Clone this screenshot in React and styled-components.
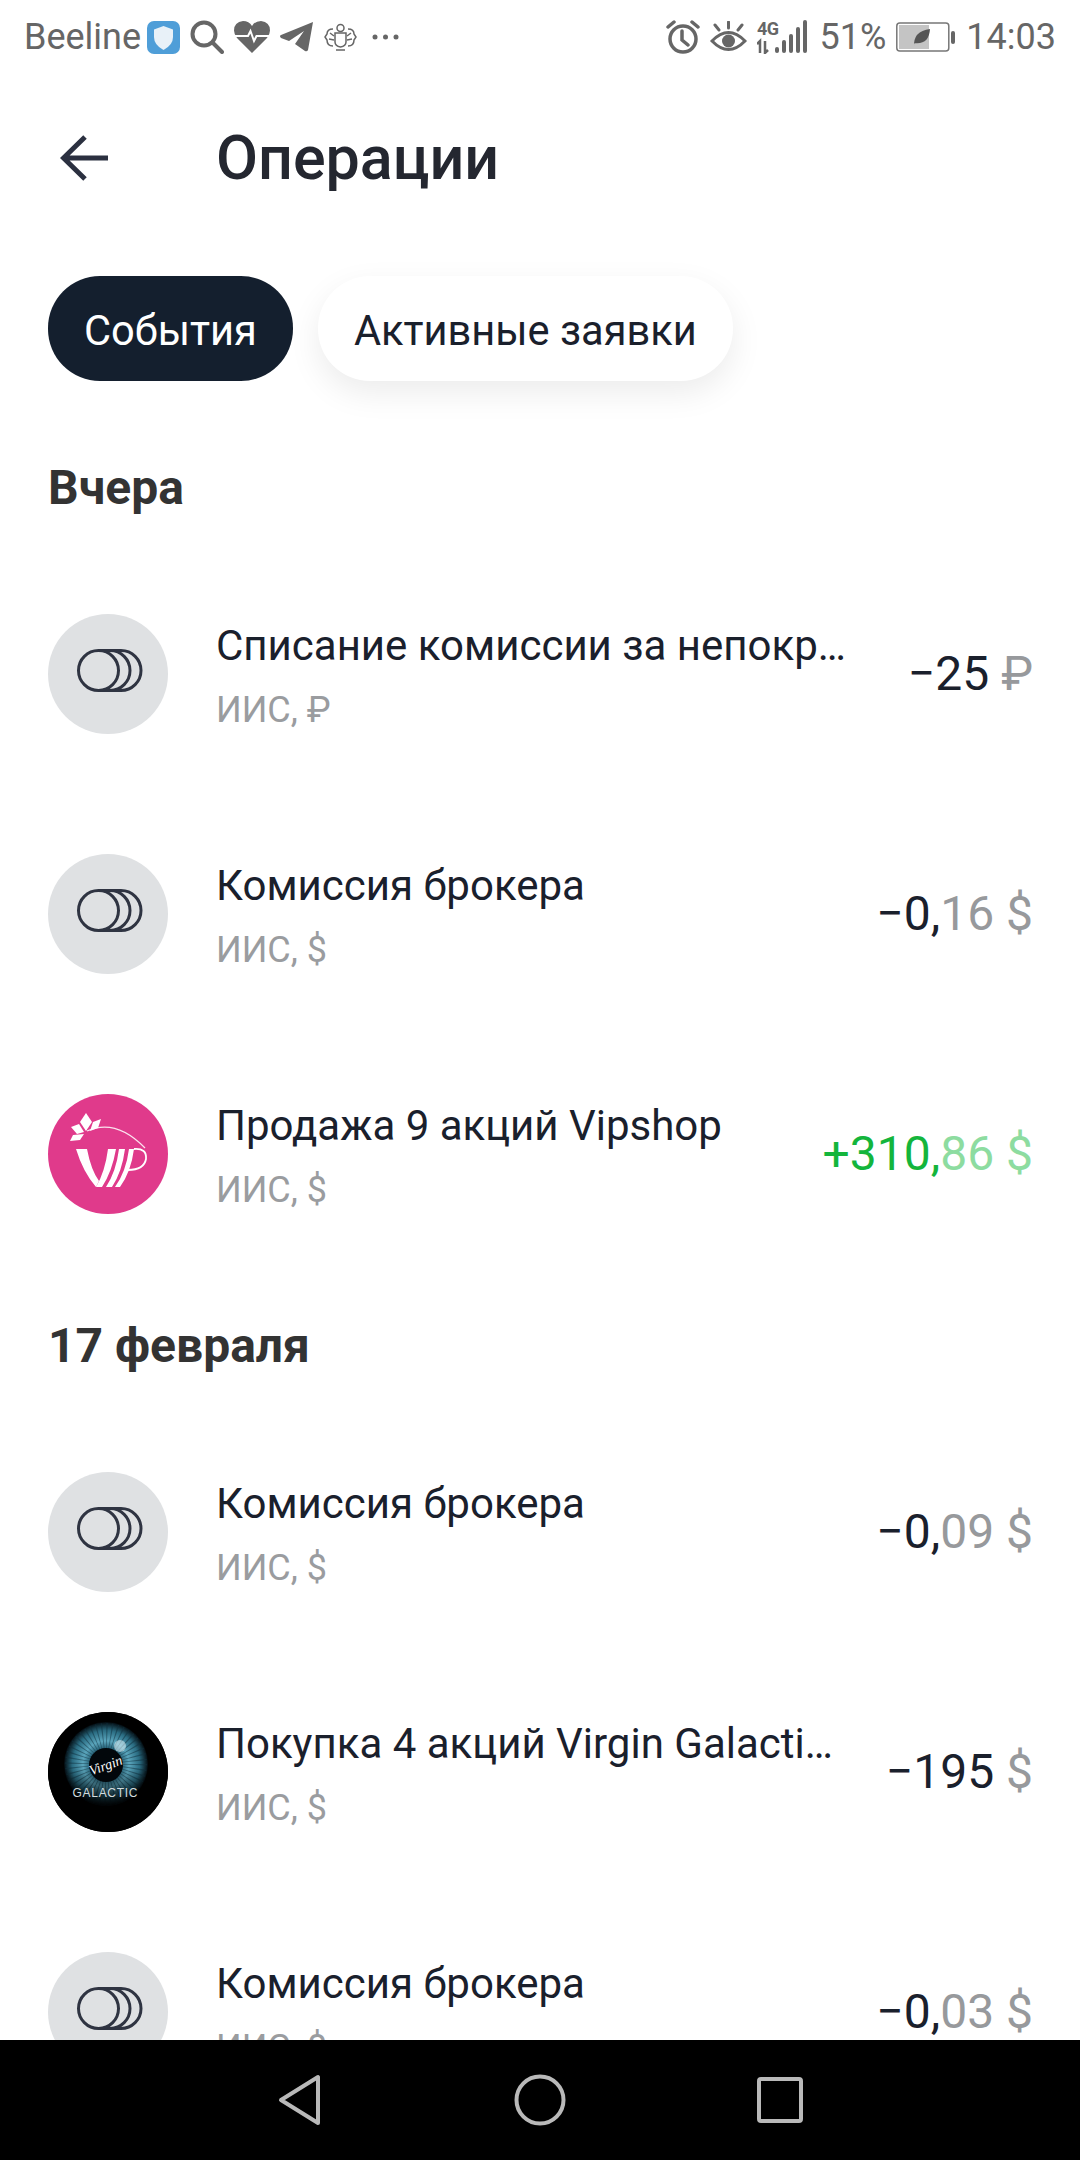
import React from 'react';
import styled, {createGlobalStyle} from 'styled-components';

const GlobalStyle = createGlobalStyle`
	html, body {
		margin: 0;
		padding: 0;
		background: #fff;
	}
	body {
		font-family: Roboto, "Noto Sans", sans-serif;
	}
`;

const Screen = styled.div`
	width: 1080px;
	height: 2160px;
	display: flex;
	flex-direction: column;
	overflow: hidden;
	background: #fff;
`;

const StatusBar = styled.div`
	height: 74px;
	flex: none;
	display: flex;
	justify-content: space-between;
	align-items: center;
	padding: 0 24px;
	color: #666;
	font-size: 36px;
	line-height: 74px;
`;

const StatusGroup = styled.div`
	display: flex;
	align-items: center;
	gap: 10px;

	svg {
		display: block;
		flex: none;
	}
`;

const Carrier = styled.span`
	margin-right: -4px;
`;

const Header = styled.div`
	height: 168px;
	flex: none;
	display: flex;
	align-items: center;
	padding-left: 60px;
	color: #1f2430;

	h1 {
		margin: 0 0 0 108px;
		font-size: 61px;
		font-weight: 500;
		color: #242730;
	}
`;

const Content = styled.div`
	flex: 1;
	min-height: 0;
	overflow: hidden;
`;

const Tabs = styled.div`
	display: flex;
	gap: 25px;
	padding: 34px 48px 35px;
`;

const Tab = styled.div`
	height: 105px;
	box-sizing: border-box;
	display: flex;
	align-items: center;
	padding: 4px 36px 0;
	border-radius: 52px;
	font-size: 41.6px;
	background: ${props => (props.$active ? '#141f2e' : '#fff')};
	color: ${props => (props.$active ? '#fff' : '#1a202c')};
	box-shadow: ${props => (props.$active ? 'none' : '0 12px 32px rgba(0, 0, 0, 0.08)')};
`;

const SectionTitle = styled.h2`
	margin: 0;
	height: 138px;
	padding: 44px 48px 0;
	box-sizing: border-box;
	font-size: 48px;
	line-height: 56px;
	font-weight: 700;
	color: #333;
`;

const Row = styled.div`
	height: 240px;
	display: flex;
	align-items: center;
	padding: 0 47px 0 48px;
`;

const Avatar = styled.div`
	width: 120px;
	height: 120px;
	flex: none;
	border-radius: 50%;
	overflow: hidden;
	background: ${props => props.$bg || '#dfe1e3'};

	svg {
		display: block;
	}
`;

const RowText = styled.div`
	flex: 1;
	min-width: 0;
	margin-left: 48px;
	padding-top: 4px;
`;

const RowTitle = styled.div`
	max-width: 632px;
	font-size: 42px;
	line-height: 50px;
	color: #1a202c;
	white-space: nowrap;
	overflow: hidden;
	text-overflow: ellipsis;
`;

const RowSub = styled.div`
	margin-top: 17px;
	font-size: 36px;
	line-height: 44px;
	color: #9a9c9f;
`;

const Amount = styled.div`
	flex: none;
	font-size: 48px;
	line-height: 56px;
	color: ${props => (props.$plus ? '#14b53c' : '#1a202c')};

	span {
		color: ${props => (props.$plus ? '#8ddca0' : '#97999c')};
	}
`;

const NavBar = styled.div`
	height: 120px;
	flex: none;
	display: flex;
	justify-content: center;
	align-items: center;
	background: #000;
`;

const NavItem = styled.div`
	width: 240px;
	display: flex;
	justify-content: center;
`;

const Coins = () => (
	<svg width='120' height='120' viewBox='0 0 120 120' fill='none' stroke='#2f3442' strokeWidth='3'>
		<path d='M62 36.5A20 20 0 0 1 62 76.5' />
		<path d='M73 36.5A20 20 0 0 1 73 76.5' />
		<path d='M50 36.5H73M50 76.5H73' />
		<circle cx='50.5' cy='56.5' r='20' />
	</svg>
);

const VipLogo = () => (
	<svg width='120' height='120' viewBox='0 0 120 120'>
		<g fill='#fff'>
			<path d='M28 55H39Q43 76 51 87L48 93Q35 78 28 55Z' />
			<path d='M48 93Q57 78 60 55H68Q64 78 54 93Z' />
			<path d='M58 93Q68 78 71 55H77Q74 78 64 93Z' />
			<path d='M67 93Q78 78 81 55H86Q83 78 72 93Z' />
			<path d='M23 33L31 30L36 38L29 40Z' />
			<path d='M32 28L38 19L44 28L38 37Z' />
			<path d='M42 37L45 28L53 25L50 34Z' />
			<path d='M22 47L25 41L36 40L32 46Z' />
		</g>
		<g fill='none' stroke='#fff'>
			<path d='M39 37Q68 24 97 54' strokeWidth='1.3' opacity='0.85' />
			<path d='M86 55Q99 54 98 65Q96 76 80 76' strokeWidth='1.8' />
		</g>
	</svg>
);

const VirginLogo = () => (
	<svg width='120' height='120' viewBox='0 0 120 120'>
		<defs>
			<radialGradient id='iris' cx='50%' cy='50%' r='50%'>
				<stop offset='35%' stopColor='#1e566b' />
				<stop offset='55%' stopColor='#5ba6bd' />
				<stop offset='80%' stopColor='#2a6c82' />
				<stop offset='100%' stopColor='#020a0f' />
			</radialGradient>
			<linearGradient id='fade' x1='0' y1='0' x2='0' y2='1'>
				<stop offset='55%' stopColor='#000' stopOpacity='0' />
				<stop offset='100%' stopColor='#000' stopOpacity='0.85' />
			</linearGradient>
		</defs>
		<rect width='120' height='120' fill='#000' />
		<circle cx='58' cy='52' r='42' fill='url(#iris)' />
		<circle cx='58' cy='52' r='28' fill='none' stroke='#0f2f3d' strokeWidth='26' strokeDasharray='1 3' opacity='0.5' />
		<circle cx='58' cy='52' r='42' fill='url(#fade)' />
		<circle cx='72' cy='34' r='6' fill='#dff2f8' opacity='0.55' />
		<circle cx='58' cy='53' r='17' fill='#02070b' />
		<text x='58' y='58' textAnchor='middle' fontFamily='Liberation Serif, serif' fontStyle='italic' fontSize='14' fill='#fff' transform='rotate(-20 58 54)'>Virgin</text>
		<text x='57' y='85' textAnchor='middle' textLength='65' fontFamily='Liberation Sans, sans-serif' fontSize='12' fill='#d3dcdf'>GALACTIC</text>
	</svg>
);

const BackArrow = () => (
	<svg width='48' height='46' viewBox='0 0 48 46' fill='none' stroke='#2b3040' strokeWidth='5'>
		<path d='M48 23H4M25 2L3.5 23L25 44' />
	</svg>
);

const Shield = () => (
	<svg width='33' height='33' viewBox='0 0 33 33'>
		<rect width='33' height='33' rx='7' fill='#4f9ed8' />
		<path d='M16.5 5L26 8.500V16Q26 24 16.500 29Q7 24 7 16V8.500Z' fill='#e8f1f8' />
	</svg>
);

const Search = () => (
	<svg width='34' height='34' viewBox='0 0 34 34' fill='none' stroke='#666' strokeWidth='4' strokeLinecap='round'>
		<circle cx='14' cy='14' r='11.500' />
		<path d='M22.500 22.500L32 32' />
	</svg>
);

const Heart = () => (
	<svg width='36' height='32' viewBox='0 0 36 32'>
		<path d='M18 32L3 17Q0 13 0 9.500Q0 1 9 0Q15 0 18 5Q21 0 27 0Q36 1 36 9.500Q36 13 33 17Z' fill='#666' />
		<path d='M1 15H14L16.500 10L20 20L22.500 15H35' fill='none' stroke='#fff' strokeWidth='2' />
	</svg>
);

const Plane = () => (
	<svg width='34' height='30' viewBox='0 0 34 30'>
		<path d='M33 0L28 28Q27 30 25 29L15 22L24 9L9 19L1 16Q-1 14 1 13Z' fill='#666' />
	</svg>
);

const Crest = () => (
	<svg width='33' height='30' viewBox='0 0 33 30' fill='none' stroke='#666' strokeWidth='1.500'>
		<path d='M11 11H22V20Q22 24 16.500 25Q11 24 11 20Z' />
		<circle cx='16.500' cy='6' r='3.500' />
		<path d='M9 7Q3 7 3 12L1 15L3 18Q3 24 9 24M24 7Q30 7 30 12L32 15L30 18Q30 24 24 24' />
		<path d='M6 11L10 14M5 17L10 18M27 11L23 14M28 17L23 18M12 28H21' />
	</svg>
);

const Dots = styled.svg`
	margin-left: 5px;
`;

const Alarm = () => (
	<svg width='34' height='34' viewBox='0 0 34 34' fill='none' stroke='#666' strokeWidth='3.500'>
		<circle cx='17' cy='19' r='13' />
		<path d='M16 11V20L22 25M2 7L8 2M32 7L26 2' strokeLinecap='round' />
	</svg>
);

const Eye = () => (
	<svg width='37' height='32' viewBox='0 0 37 32'>
		<path d='M2 20Q18.500 3 35 20Q18.500 37 2 20Z' fill='none' stroke='#666' strokeWidth='3' />
		<circle cx='18.500' cy='20' r='6.500' fill='#666' />
		<path d='M18.500 1V7M5 4L9 9M32 4L28 9' fill='none' stroke='#666' strokeWidth='3' strokeLinecap='round' />
	</svg>
);

const Signal = () => (
	<svg width='53' height='34' viewBox='0 0 53 34'>
		<text x='0' y='15' fontFamily='Roboto, sans-serif' fontSize='18' fontWeight='700' fill='#666' letterSpacing='-0.500'>4G</text>
		<path d='M3 33V21L0 24M8 21V33L11 30' fill='none' stroke='#666' strokeWidth='2.500' />
		<rect x='18' y='27' width='4' height='6' rx='2' fill='#666' />
		<rect x='25' y='20' width='4' height='13' rx='2' fill='#666' />
		<rect x='32' y='14' width='4' height='19' rx='2' fill='#666' />
		<rect x='39' y='7' width='4' height='26' rx='2' fill='#666' />
		<rect x='46' y='0' width='4' height='33' rx='2' fill='#666' />
	</svg>
);

const Battery = () => (
	<svg width='60' height='30' viewBox='0 0 60 30'>
		<rect x='0.800' y='1' width='52' height='28' rx='3' fill='none' stroke='#777' strokeWidth='1.500' />
		<rect x='3' y='3' width='30' height='24' fill='#c4c4c4' />
		<rect x='55' y='9' width='4' height='13' rx='2' fill='#666' />
		<path d='M18 25Q17 9 34 7Q33 23 18 21Z' fill='#555' />
	</svg>
);

const NavBack = () => (
	<svg width='44' height='52' viewBox='0 0 44 52' fill='none' stroke='#b9b9b9' strokeWidth='4' strokeLinejoin='round'>
		<path d='M40 3V49L3 26Z' />
	</svg>
);

const NavHome = () => (
	<svg width='52' height='52' viewBox='0 0 52 52' fill='none' stroke='#b9b9b9' strokeWidth='4'>
		<circle cx='26' cy='26' r='23.500' />
	</svg>
);

const NavRecent = () => (
	<svg width='46' height='46' viewBox='0 0 46 46' fill='none' stroke='#b9b9b9' strokeWidth='4' strokeLinejoin='round'>
		<rect x='2' y='2' width='42' height='42' rx='2' />
	</svg>
);

const sections = [
	{
		title: 'Вчера',
		rows: [
			{title: 'Списание комиссии за непокрытую позицию', sub: 'ИИС, ₽', whole: '−25', rest: ' ₽'},
			{title: 'Комиссия брокера', sub: 'ИИС, $', whole: '−0,', rest: '16 $'},
			{title: 'Продажа 9 акций Vipshop', sub: 'ИИС, $', whole: '+310,', rest: '86 $', plus: true, logo: 'vip'},
		],
	},
	{
		title: '17 февраля',
		rows: [
			{title: 'Комиссия брокера', sub: 'ИИС, $', whole: '−0,', rest: '09 $'},
			{title: 'Покупка 4 акций Virgin Galactic Holdings', sub: 'ИИС, $', whole: '−195', rest: ' $', logo: 'virgin'},
			{title: 'Комиссия брокера', sub: 'ИИС, $', whole: '−0,', rest: '03 $'},
		],
	},
];

function renderAvatar(logo) {
	if (logo === 'vip') {
		return (
			<Avatar $bg='#e03a8b'>
				<VipLogo />
			</Avatar>
		);
	}
	if (logo === 'virgin') {
		return (
			<Avatar $bg='#000'>
				<VirginLogo />
			</Avatar>
		);
	}
	return (
		<Avatar>
			<Coins />
		</Avatar>
	);
}

const App = () => {
	return (
		<Screen>
			<GlobalStyle />
			<StatusBar>
				<StatusGroup>
					<Carrier>Beeline</Carrier>
					<Shield />
					<Search />
					<Heart />
					<Plane />
					<Crest />
					<Dots width='27' height='6' viewBox='0 0 27 6' fill='#666'>
						<circle cx='3' cy='3' r='2.500' />
						<circle cx='13.500' cy='3' r='2.500' />
						<circle cx='24' cy='3' r='2.500' />
					</Dots>
				</StatusGroup>
				<StatusGroup>
					<Alarm />
					<Eye />
					<Signal />
					<span>51%</span>
					<Battery />
					<span>14:03</span>
				</StatusGroup>
			</StatusBar>
			<Header>
				<BackArrow />
				<h1>Операции</h1>
			</Header>
			<Content>
				<Tabs>
					<Tab $active>События</Tab>
					<Tab>Активные заявки</Tab>
				</Tabs>
				{sections.map((section, index) => (
					<div key={index}>
						<SectionTitle>{section.title}</SectionTitle>
						{section.rows.map((row, i) => (
							<Row key={i}>
								{renderAvatar(row.logo)}
								<RowText>
									<RowTitle>{row.title}</RowTitle>
									<RowSub>{row.sub}</RowSub>
								</RowText>
								<Amount $plus={row.plus}>
									{row.whole}
									<span>{row.rest}</span>
								</Amount>
							</Row>
						))}
					</div>
				))}
			</Content>
			<NavBar>
				<NavItem>
					<NavBack />
				</NavItem>
				<NavItem>
					<NavHome />
				</NavItem>
				<NavItem>
					<NavRecent />
				</NavItem>
			</NavBar>
		</Screen>
	);
};

export default App;
